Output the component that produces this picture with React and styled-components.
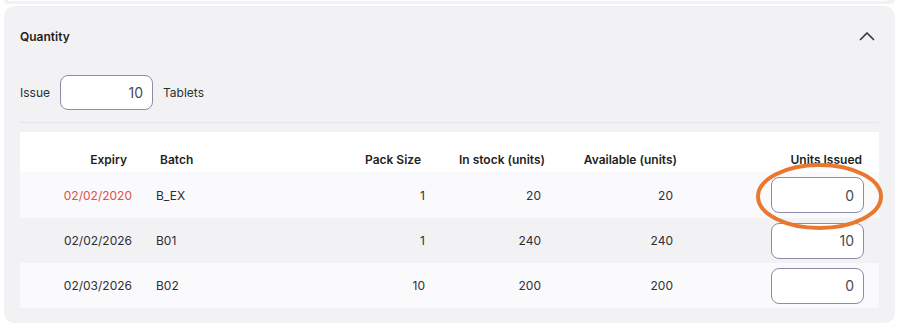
import React, { useState } from "react";
import styled, { createGlobalStyle } from "styled-components";

const GlobalStyle = createGlobalStyle`
  body {
    margin: 0;
    background: #ffffff;
    font-family: Inter, "Noto Sans", "Liberation Sans", sans-serif;
    color: #2b2b2f;
  }
`;

const Page = styled.div`
  width: 902px;
  height: 330px;
  padding: 0 7px 0 4px;
  box-sizing: border-box;
`;

const PrevPanel = styled.div`
  height: 4px;
  background: #f2f2f4;
  border-radius: 0 0 10px 10px;
  padding: 0 8px 0 4px;
`;

const PrevCard = styled.div`
  height: 1px;
  background: #ffffff;
  border-radius: 0 0 6px 6px;
`;

const Panel = styled.section`
  margin-top: 2px;
  background: #f2f2f4;
  border-radius: 10px;
  padding: 0 16px 15px 16px;
`;

const PanelHeader = styled.div`
  height: 60px;
  display: flex;
  align-items: center;
  justify-content: space-between;
`;

const Title = styled.h3`
  margin: 0;
  font-size: 12px;
  font-weight: 600;
  color: #1f1f23;
`;

const Toggle = styled.button`
  border: 0;
  background: none;
  padding: 0;
  margin-right: 4px;
  display: flex;
  color: #3a3a3e;
  cursor: pointer;
`;

const IssueRow = styled.div`
  display: flex;
  align-items: center;
  gap: 10px;
  padding-top: 9px;
  font-size: 12px;
  color: #2f2f33;
`;

const NumberInput = styled.input`
  box-sizing: border-box;
  width: ${(p) => p.$width}px;
  height: ${(p) => p.$height}px;
  border: 1px solid #8c8ca6;
  border-radius: 8px;
  background: #ffffff;
  text-align: right;
  padding: 0 9px 0 6px;
  font-family: inherit;
  font-size: 14px;
  font-weight: 400;
  color: #4a4a55;
  outline: none;
`;

const Divider = styled.div`
  height: 1px;
  background: #e6e6ea;
  margin: 12px 0 9px;
`;

const Table = styled.div`
  background: #ffffff;
  display: grid;
  grid-template-columns: 120px 160px 140px 120px 140px 1fr;
`;

const HeadCell = styled.div`
  height: 40px;
  box-sizing: border-box;
  padding: 20px ${(p) => p.$pr || 0}px 0 ${(p) => p.$pl || 0}px;
  text-align: ${(p) => p.$align};
  font-size: 12px;
  font-weight: 600;
  line-height: 16px;
  color: #1f1f23;
  white-space: nowrap;
`;

const Cell = styled.div`
  height: ${(p) => (p.$first ? 46 : 45)}px;
  box-sizing: border-box;
  display: flex;
  align-items: center;
  justify-content: ${(p) => (p.$align === "right" ? "flex-end" : "flex-start")};
  padding: 0 ${(p) => p.$pr || 0}px 0 ${(p) => p.$pl || 0}px;
  background: ${(p) => (p.$odd ? "#fafafc" : "#f2f2f4")};
  font-size: 12px;
  color: ${(p) => (p.$expired ? "#e04f4a" : "#2f2f33")};
`;

const InputWrap = styled.div`
  position: relative;
  display: flex;
`;

const Annotation = styled.svg`
  position: absolute;
  left: -15px;
  top: -14px;
  z-index: 2;
  pointer-events: none;
  overflow: visible;
`;

const batches = [
  { id: 1, expiry: "02/02/2020", batch: "B_EX", pack: 1, stock: 20, available: 20, issued: 0, expired: true },
  { id: 2, expiry: "02/02/2026", batch: "B01", pack: 1, stock: 240, available: 240, issued: 10 },
  { id: 3, expiry: "02/03/2026", batch: "B02", pack: 10, stock: 200, available: 200, issued: 0 },
];

function ChevronUp() {
  return (
    <svg width="16" height="10" viewBox="0 0 16 10" fill="none">
      <path d="M1.5 8.5 L8 2 L14.5 8.5" stroke="currentColor" strokeWidth="1.7" strokeLinecap="round" strokeLinejoin="round" />
    </svg>
  );
}

export default function App() {
  const [issue, setIssue] = useState("10");
  const [issued, setIssued] = useState(batches.map((b) => String(b.issued)));

  return (
    <>
      <GlobalStyle />
      <Page>
        <PrevPanel>
          <PrevCard />
        </PrevPanel>
        <Panel>
          <PanelHeader>
            <Title>Quantity</Title>
            <Toggle aria-label="Collapse">
              <ChevronUp />
            </Toggle>
          </PanelHeader>
          <IssueRow>
            <span>Issue</span>
            <NumberInput
              $width={93}
              $height={35}
              value={issue}
              onChange={(e) => setIssue(e.target.value)}
            />
            <span>Tablets</span>
          </IssueRow>
          <Divider />
          <Table>
            <HeadCell $align="right" $pr={13}>Expiry</HeadCell>
            <HeadCell $align="left" $pl={20}>Batch</HeadCell>
            <HeadCell $align="right" $pr={19}>Pack Size</HeadCell>
            <HeadCell $align="right" $pr={15}>In stock (units)</HeadCell>
            <HeadCell $align="right" $pr={23}>Available (units)</HeadCell>
            <HeadCell $align="right" $pr={17}>Units Issued</HeadCell>
            {batches.map((b, i) => {
              const odd = i % 2 === 0;
              const first = i === 0;
              return (
                <React.Fragment key={b.id}>
                  <Cell $odd={odd} $first={first} $align="right" $pr={8} $expired={b.expired}>{b.expiry}</Cell>
                  <Cell $odd={odd} $first={first} $pl={16}>{b.batch}</Cell>
                  <Cell $odd={odd} $first={first} $align="right" $pr={15}>{b.pack}</Cell>
                  <Cell $odd={odd} $first={first} $align="right" $pr={19}>{b.stock}</Cell>
                  <Cell $odd={odd} $first={first} $align="right" $pr={27}>{b.available}</Cell>
                  <Cell $odd={odd} $first={first} $align="right" $pr={15}>
                    <InputWrap>
                      <NumberInput
                        $width={93}
                        $height={36}
                        value={issued[i]}
                        onChange={(e) => {
                          const next = [...issued];
                          next[i] = e.target.value;
                          setIssued(next);
                        }}
                      />
                      {b.expired && (
                        <Annotation width="127" height="67" viewBox="0 0 127 67">
                          <ellipse cx="63.5" cy="33.5" rx="61.5" ry="31.5" fill="none" stroke="#e8782f" strokeWidth="4" />
                        </Annotation>
                      )}
                    </InputWrap>
                  </Cell>
                </React.Fragment>
              );
            })}
          </Table>
        </Panel>
      </Page>
    </>
  );
}
